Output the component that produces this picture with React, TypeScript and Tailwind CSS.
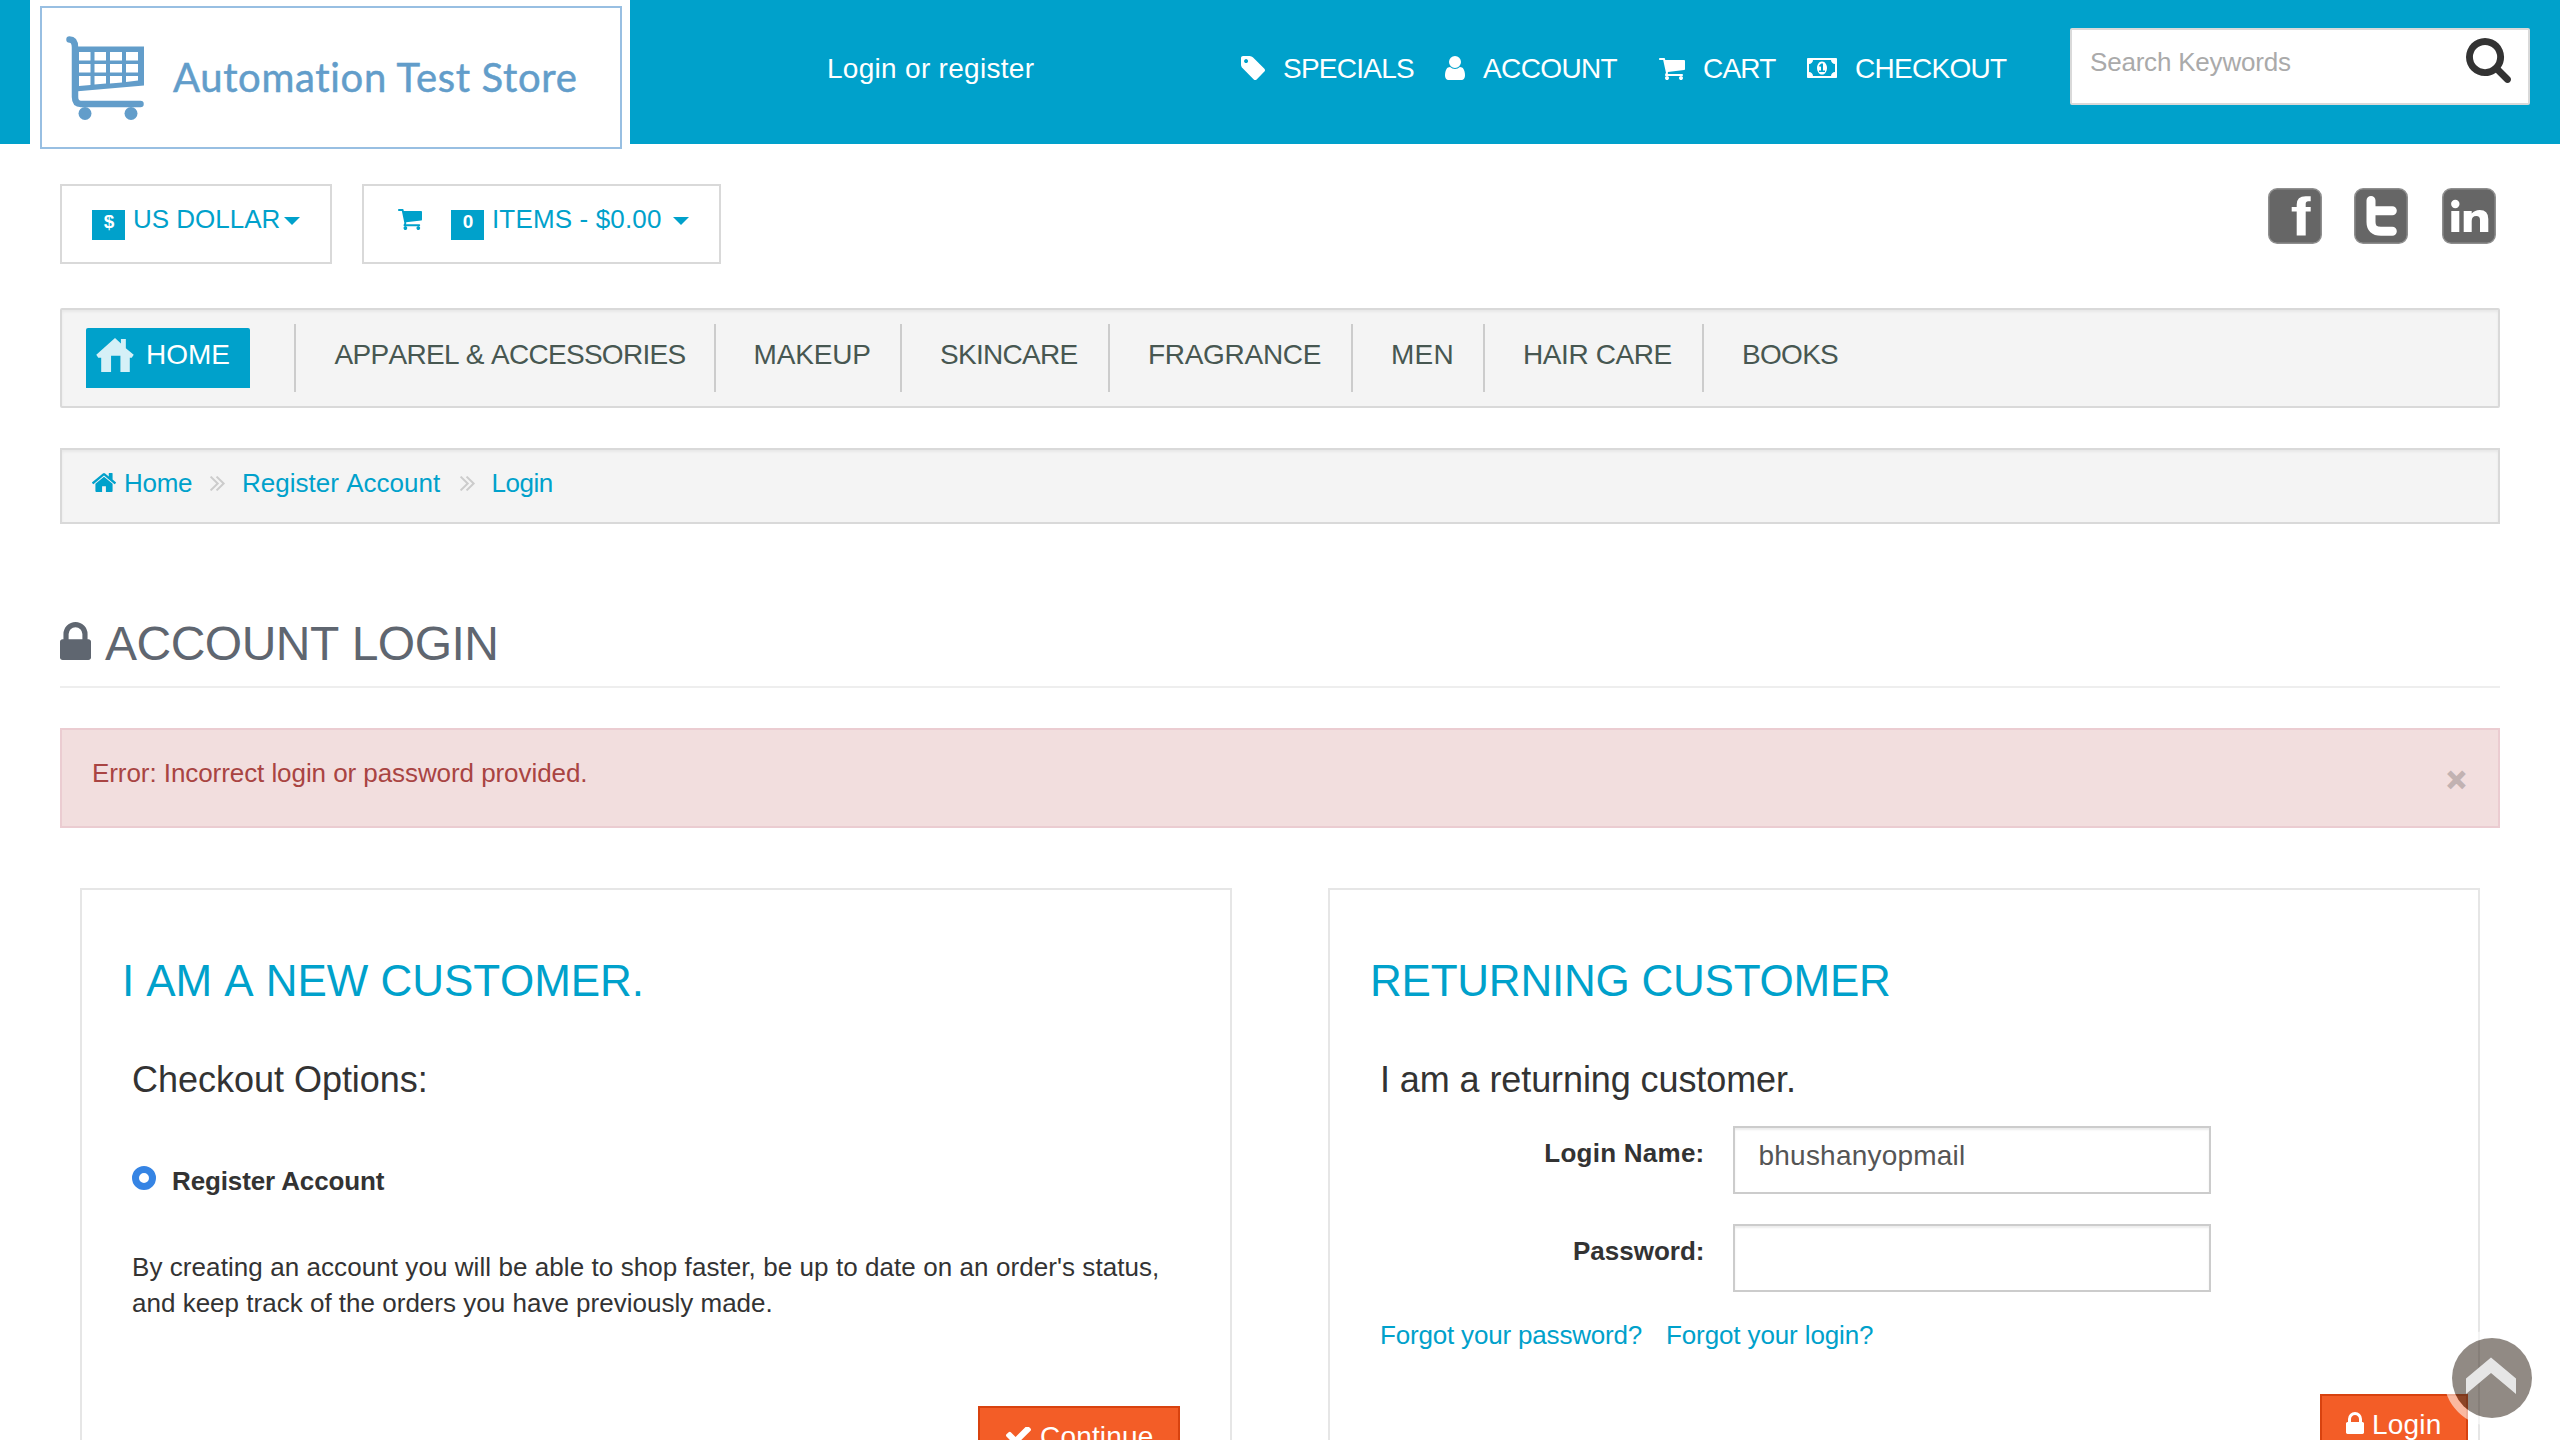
import React from 'react';

type IconProps = { box: string; d: string; className: string };

function Icon({ box, d, className }: IconProps) {
  return (
    <svg viewBox={box} preserveAspectRatio="none" fill="currentColor" className={`block flex-none ${className}`}>
      <path d={d} />
    </svg>
  );
}

const CART = {
  box: '64 256 1664 1408',
  d: 'M704 1536q0 52-38 90t-90 38-90-38-38-90 38-90 90-38 90 38 38 90zm896 0q0 52-38 90t-90 38-90-38-38-90 38-90 90-38 90 38 38 90zm128-1088v512q0 24-16.5 42.5t-40.5 21.5l-1044 122q13 60 13 70 0 16-24 64h920q26 0 45 19t19 45-19 45-45 19h-1024q-26 0-45-19t-19-45q0-11 8-31.5t16-36 21.5-40 15.5-29.5l-177-823h-204q-26 0-45-19t-19-45 19-45 45-19h256q16 0 28.5 6.5t19.5 15.5 13 24.5 8 26 5.5 29.5 4.5 26h1201q26 0 45 19t19 45z',
};
const LOCK = {
  box: '320 128 1152 1408',
  d: 'M640 768h512v-192q0-106-75-181t-181-75-181 75-75 181v192zm832 96v576q0 40-28 68t-68 28h-960q-40 0-68-28t-28-68v-576q0-40 28-68t68-28h32v-192q0-184 132-316t316-132 316 132 132 316v192h32q40 0 68 28t28 68z',
};
const TAG = {
  box: '128 128 1515 1515',
  d: 'M576 448q0-53-37.5-90.5t-90.5-37.5-90.5 37.5-37.5 90.5 37.5 90.5 90.5 37.5 90.5-37.5 37.5-90.5zm1067 576q0 53-37 90l-491 492q-39 37-91 37-53 0-90-37l-715-716q-38-37-64.5-101t-26.5-117v-416q0-52 38-90t90-38h416q53 0 117 26.5t102 64.5l715 714q37 39 37 91z',
};
const USER = {
  box: '256 128 1280 1536',
  d: 'M1536 1399q0 109-62.5 187t-150.5 78h-854q-88 0-150.5-78t-62.5-187q0-85 8.5-160.5t31.5-152 58.5-131 94-89 134.5-34.5q131 128 313 128t313-128q76 0 134.5 34.5t94 89 58.5 131 31.5 152 8.5 160.5zm-256-887q0 159-112.5 271.5t-271.5 112.5-271.5-112.5-112.5-271.5 112.5-271.5 271.5-112.5 271.5 112.5 112.5 271.5z',
};
const SEARCH = {
  box: '64 128 1664 1664',
  d: 'M1216 832q0-185-131.5-316.5t-316.5-131.5-316.5 131.5-131.5 316.5 131.5 316.5 316.5 131.5 316.5-131.5 131.5-316.5zm512 832q0 52-38 90t-90 38q-54 0-90-38l-343-342q-179 124-399 124-143 0-273.5-55.5t-225-150-150-225-55.5-273.5 55.5-273.5 150-225 225-150 273.5-55.5 273.5 55.5 225 150 150 225 55.5 273.5q0 220-124 399l343 343q37 37 37 90z',
};
const HOME = {
  box: '90 253 1612 1283',
  d: 'M1472 992v480q0 26-19 45t-45 19h-384v-384h-256v384h-384q-26 0-45-19t-19-45v-480q0-1 .5-3t.5-3l575-474 575 474q1 2 1 6zm223-69l-62 74q-8 9-21 11h-3q-13 0-21-7l-692-577-692 577q-12 8-24 7-13-2-21-11l-62-74q-8-10-7-23.5t11-21.5l719-599q32-26 76-26t76 26l244 204v-195q0-14 9-23t23-9h192q14 0 23 9t9 23v408l219 182q10 8 11 21.5t-7 23.5z',
};
const CHECK = {
  box: '121 402 1550 1120',
  d: 'M1671 566q0 40-28 68l-724 724-136 136q-28 28-68 28t-68-28l-136-136-362-362q-28-28-28-68t28-68l136-136q28-28 68-28t68 28l294 295 656-657q28-28 68-28t68 28l136 136q28 28 28 68z',
};
const ANGLES = {
  box: '429 461 966 998',
  d: 'M1011 960q0 13-10 23l-466 466q-10 10-23 10t-23-10l-50-50q-10-10-10-23t10-23l393-393-393-393q-10-10-10-23t10-23l50-50q10-10 23-10t23 10l466 466q10 10 10 23zm384 0q0 13-10 23l-466 466q-10 10-23 10t-23-10l-50-50q-10-10-10-23t10-23l393-393-393-393q-10-10-10-23t10-23l50-50q10-10 23-10t23 10l466 466q10 10 10 23z',
};
const MONEY = {
  box: '0 256 1920 1280',
  d: 'M768 1152h384v-96h-128v-448h-114l-148 137 77 80q42-37 55-57h2v288h-128v96zm512-256q0 70-21 142t-59.5 134-101.5 101-138 39-138-39-101.5-101-59.5-134-21-142 21-142 59.5-134 101.5-101 138-39 138 39 101.5 101 59.5 134 21 142zm512 256v-512q-106 0-181-75t-75-181h-1152q0 106-75 181t-181 75v512q106 0 181 75t75 181h1152q0-106 75-181t181-75zm128-832v1152q0 26-19 45t-45 19h-1792q-26 0-45-19t-19-45v-1152q0-26 19-45t45-19h1792q26 0 45 19t19 45z',
};

function Caret({ className }: { className: string }) {
  return (
    <svg viewBox="0 0 16 8" fill="currentColor" className={`block h-2 w-4 flex-none ${className}`}>
      <path d="M0 0h16l-8 8z" />
    </svg>
  );
}

function Logo() {
  return (
    <div className="ml-[30px] h-[144px] w-[600px] flex-none bg-white pl-[10px] pt-[6px]">
      <div className="flex h-[143px] w-[582px] border-2 border-[#98bfe2] bg-white text-[#629dca]">
        <svg viewBox="66 36 78 84" className="ml-[24px] mt-[28px] block h-[84px] w-[78px] flex-none">
          <path
            d="M69.5 39.5q5.500 0 5.500 8V97q0 7 6 7h59.500"
            fill="none"
            stroke="currentColor"
            strokeWidth="6.500"
            strokeLinecap="round"
          />
          <path
            fill="currentColor"
            fillRule="evenodd"
            d="M75 46.500h69V85.500L75 91.500zM79 52v8.500h11.500V52zM94.500 52v8.500h11.500V52zM110 52v8.500h12V52zM126 52v8.500h12V52zM79 64v8.500h11.500V64zM94.500 64v8.500h11.500V64zM110 64v8.500h12V64zM126 64v8.500h12V64zM79 76v10l11.500-1V76zM94.500 76v8.500l11.500-1V76zM110 76v7.500l12-1V76zM126 76v6l12-1.500V76z"
          />
          <ellipse cx="85" cy="113.500" rx="6.500" ry="6.500" fill="currentColor" />
          <ellipse cx="131" cy="113.500" rx="6.500" ry="6.500" fill="currentColor" />
        </svg>
        <span className="ml-[29px] mt-[45px] whitespace-nowrap font-[Lato] text-[40px] leading-[48px] tracking-[0.66px] [-webkit-text-stroke:0.5px_#629dca]">
          Automation Test Store
        </span>
      </div>
    </div>
  );
}

function Header() {
  return (
    <header className="flex h-[144px] items-start bg-[#00a1cb] text-[28px] leading-[31px] text-white">
      <Logo />
      <a className="ml-[197px] mt-[53px] w-[414px] flex-none tracking-[0.29px]">Login or register</a>
      <nav className="flex flex-none items-start pt-[53px]">
        <Icon {...TAG} className="mt-[3px] h-6 w-6" />
        <a className="ml-[18px] w-[162px] tracking-[-0.75px]">SPECIALS</a>
        <Icon {...USER} className="mt-[3px] h-6 w-5" />
        <a className="ml-[18px] w-[176px] tracking-[-0.63px]">ACCOUNT</a>
        <Icon {...CART} className="mt-[5px] h-[22px] w-[26px]" />
        <a className="ml-[18px] w-[104px] tracking-[-0.77px]">CART</a>
        <Icon {...MONEY} className="mt-[5px] h-5 w-[30px]" />
        <a className="ml-[18px] w-[215px] tracking-[-0.72px]">CHECKOUT</a>
      </nav>
      <div className="mt-[28px] flex h-[77px] w-[460px] flex-none items-start rounded-[2px] border-2 border-[#d9d9d9] bg-white">
        <input
          placeholder="Search Keywords"
          className="w-[394px] pb-[26px] pl-[18px] pt-[17px] text-[26px] leading-[30px] tracking-[-0.2px] text-[#555] outline-none placeholder:text-[#aaa]"
        />
        <Icon {...SEARCH} className="mt-[8px] h-[45px] w-[45px] text-[#333]" />
      </div>
    </header>
  );
}

function Badge({ children }: { children: React.ReactNode }) {
  return (
    <span className="mt-[24px] block h-[30px] w-[33px] flex-none bg-[#00a1cb] pl-px pt-px text-center text-[19px] font-bold leading-[21px] text-white">
      {children}
    </span>
  );
}

function SocialTile({ children, className }: { children: React.ReactNode; className: string }) {
  return (
    <svg viewBox="0 0 54 56" className={`block h-[56px] w-[54px] flex-none ${className}`}>
      <rect x="0.750" y="0.750" width="52.500" height="54.500" rx="8.500" fill="#666" stroke="#8f8f8f" strokeWidth="1.500" />
      {children}
    </svg>
  );
}

function Toolbar() {
  return (
    <div className="mt-[40px] flex h-[80px] items-start pl-[60px] text-[26px] leading-[30px] text-[#00a1cb]">
      <div className="flex h-[80px] w-[272px] flex-none items-start border-2 border-[#d9d9d9] pl-[30px]">
        <Badge>$</Badge>
        <span className="ml-[8px] mt-[18px] w-[151px] flex-none whitespace-nowrap">US DOLLAR</span>
        <Caret className="mt-[31px]" />
      </div>
      <div className="ml-[30px] flex h-[80px] w-[359px] flex-none items-start border-2 border-[#d9d9d9] pl-[34px]">
        <Icon {...CART} className="mt-[23px] h-[21px] w-[24px]" />
        <div className="ml-[29px] flex items-start">
          <Badge>0</Badge>
          <span className="ml-[8px] mt-[18px] w-[181px] flex-none whitespace-nowrap tracking-[0.15px]">ITEMS - $0.00</span>
          <Caret className="mt-[31px]" />
        </div>
      </div>
      <div className="ml-auto mr-[64px] mt-[4px] flex">
        <SocialTile className="">
          <path d="M28.700 47.500V23.500h-5V19h5v-2.500q0-8.300 9-8.300h5v5h-2.500q-2.500 0-2.500 2.500V19h5v4.500h-5v24z" fill="#fff" />
        </SocialTile>
        <SocialTile className="ml-[32px]">
          <path
            d="M17 12.500V34q0 9.300 10 9.300h11.300M17 22.700h21.300"
            fill="none"
            stroke="#fff"
            strokeWidth="9"
            strokeLinecap="round"
          />
        </SocialTile>
        <SocialTile className="ml-[34px]">
          <circle cx="13.300" cy="16" r="4.200" fill="#fff" />
          <path
            d="M9.300 23h8v21h-8zM21.700 23h8v2.500q3-3.500 8-3.500 8.600 0 8.600 9v13h-8.300V32q0-4-3.600-4-4.700 0-4.700 5v11h-8z"
            fill="#fff"
          />
        </SocialTile>
      </div>
    </div>
  );
}

const CATEGORIES = [
  { label: 'APPAREL & ACCESSORIES', cls: 'w-[420px] pl-[38.500px] tracking-[-0.7px] [font-kerning:none] border-r-2' },
  { label: 'MAKEUP', cls: 'w-[186px] pl-[37.500px] tracking-[-0.15px] border-r-2' },
  { label: 'SKINCARE', cls: 'w-[208px] pl-[38px] tracking-[-0.71px] border-r-2' },
  { label: 'FRAGRANCE', cls: 'w-[243px] pl-[38px] tracking-[-0.3px] border-r-2' },
  { label: 'MEN', cls: 'w-[132px] pl-[38px] tracking-[0.3px] border-r-2' },
  { label: 'HAIR CARE', cls: 'w-[219px] pl-[38px] tracking-[-0.4px] border-r-2' },
  { label: 'BOOKS', cls: 'w-[160px] pl-[38px] tracking-[-0.7px]' },
];

function CategoryNav() {
  return (
    <nav className="mx-[60px] mt-[44px] flex h-[100px] items-start rounded-[2px] border-2 border-[#d9d9d9] bg-[#f4f4f4] text-[28px] leading-[31px] shadow-[inset_0_2px_3px_rgba(0,0,0,0.05)]">
      <a className="ml-[24px] mt-[18px] flex h-[60px] w-[164px] flex-none items-start rounded-t-[2px] bg-[#00a1cb] pl-[10px] pt-[10px] text-white">
        <svg viewBox="0 0 38 34.5" className="block h-[34px] w-[38px] flex-none">
          <path d="M19 0l6 5.500V1h5v9.500l8 6.500-2 3h-2v14.500H24.500V18h-9.500v16.500H5V20H2L0 17z" fill="#d5f0f7" />
        </svg>
        <span className="ml-[12px] mt-px">HOME</span>
      </a>
      <div className="mt-[14px] flex h-[68px] text-[#475751]">
        <div className="w-[46px] flex-none border-r-2 border-[#ccc]" />
        {CATEGORIES.map((c) => (
          <a key={c.label} className={`block flex-none whitespace-nowrap border-[#ccc] pt-[15px] ${c.cls}`}>
            {c.label}
          </a>
        ))}
      </div>
    </nav>
  );
}

function Breadcrumb() {
  return (
    <div className="mx-[60px] mt-[40px] flex h-[76px] items-start border-2 border-[#d9d9d9] bg-[#f4f4f4] pl-[30px] pt-[18px] text-[26px] leading-[30px] text-[#00a1cb] shadow-[inset_0_2px_3px_rgba(0,0,0,0.05)]">
      <Icon {...HOME} className="mt-[5px] h-[19px] w-[24px]" />
      <a className="ml-[8px] w-[86px] flex-none tracking-[-0.3px]">Home</a>
      <Icon {...ANGLES} className="mt-[8px] h-[15px] w-[15px] text-[#ccc]" />
      <a className="ml-[17px] w-[217.500px] flex-none tracking-[0.01px] [font-kerning:none]">Register Account</a>
      <Icon {...ANGLES} className="mt-[8px] h-[15px] w-[15px] text-[#ccc]" />
      <a className="ml-[17px] flex-none tracking-[-0.45px]">Login</a>
    </div>
  );
}

const INPUT =
  'block h-[68px] w-[478px] flex-none border-2 border-[#ccc] bg-white pb-[21px] pl-[23.500px] pt-[12px] text-[28px] leading-[31px] tracking-[0.22px] text-[#555] shadow-[inset_0_2px_2px_rgba(0,0,0,0.075)] outline-none';

function NewCustomer() {
  return (
    <section className="flex h-[620px] w-[1152px] flex-none flex-col border-2 border-[#e6e6e6] bg-white pt-[66px]">
      <h2 className="ml-[40px] text-[44px] leading-[49px] tracking-[-0.06px] text-[#00a1cb] [font-kerning:none]">
        I AM A NEW CUSTOMER.
      </h2>
      <h4 className="ml-[50px] mt-[54px] text-[36px] leading-[41px] tracking-[-0.02px]">Checkout Options:</h4>
      <label className="ml-[50px] mt-[66px] flex items-start font-bold">
        <span className="block h-6 w-6 flex-none rounded-full border-[7px] border-[#3584e4] bg-white" />
        <span className="ml-[16px] tracking-[-0.12px]">Register Account</span>
      </label>
      <p className="ml-[50px] mt-[53px] whitespace-nowrap leading-[36px] tracking-[0.07px]">
        By creating an account you will be able to shop faster, be up to date on an order's status,
        <br />
        <span className="tracking-[0.01px]">and keep track of the orders you have previously made.</span>
      </p>
      <button className="mr-[50px] mt-[85px] flex h-[68px] w-[202px] flex-none items-start self-end border-2 border-[#d8420f] bg-[#f35d27] pl-[26px] pt-[13px] text-[28px] leading-[31px] text-white">
        <Icon {...CHECK} className="mt-[6px] h-[18px] w-[25px]" />
        <span className="ml-[9px] tracking-[0.17px]">Continue</span>
      </button>
    </section>
  );
}

function ReturningCustomer() {
  return (
    <section className="flex h-[620px] w-[1152px] flex-none flex-col border-2 border-[#e6e6e6] bg-white pt-[66px]">
      <h2 className="ml-[40px] text-[44px] leading-[49px] tracking-[-0.23px] text-[#00a1cb]">RETURNING CUSTOMER</h2>
      <h4 className="ml-[50px] mt-[54px] text-[36px] leading-[41px] tracking-[-0.09px]">I am a returning customer.</h4>
      <div className="ml-[50px] mt-[26px] flex flex-col gap-[30px]">
        <div className="flex items-start">
          <label className="mr-[28.500px] w-[324.500px] flex-none pt-[12px] text-right font-bold tracking-[0.25px]">Login Name:</label>
          <input defaultValue="bhushanyopmail" className={INPUT} />
        </div>
        <div className="flex items-start">
          <label className="mr-[28.500px] w-[324.500px] flex-none pt-[12px] text-right font-bold">Password:</label>
          <input type="password" className={INPUT} />
        </div>
      </div>
      <div className="ml-[50px] mt-[28px] flex text-[#00a1cb]">
        <a className="w-[286px] flex-none tracking-[-0.18px]">Forgot your password?</a>
        <a className="tracking-[-0.12px]">Forgot your login?</a>
      </div>
      <button className="mr-[10px] mt-[44px] flex h-[68px] w-[148px] flex-none items-start self-end border-2 border-[#d8420f] bg-[#f35d27] pl-[24px] pt-[13px] text-[28px] leading-[31px] text-white">
        <Icon {...LOCK} className="mt-[3px] h-[22px] w-[18px]" />
        <span className="ml-[8px] tracking-[0.2px]">Login</span>
      </button>
    </section>
  );
}

export default function App() {
  return (
    <div className="relative h-[1440px] w-[2560px] overflow-hidden bg-white font-['Liberation_Sans',Arial,sans-serif] text-[26px] leading-[30px] text-[#333]">
      <Header />
      <Toolbar />
      <CategoryNav />
      <Breadcrumb />
      <h1 className="mx-[60px] mt-[93px] flex h-[71px] items-start border-b-2 border-[#eee] text-[48px] leading-[53px] tracking-[-0.5px] text-[#5f6670] [font-kerning:none]">
        <Icon {...LOCK} className="mt-[5px] h-[38px] w-[31px]" />
        <span className="ml-[14px]">ACCOUNT LOGIN</span>
      </h1>
      <div className="mx-[60px] mt-[40px] flex h-[100px] items-start border-2 border-[#ebccd1] bg-[#f2dede] text-[#a94442]">
        <span className="ml-[30px] mt-[28px] tracking-[-0.07px]">Error: Incorrect login or password provided.</span>
        <button className="ml-auto mr-[32px] mt-[31px] text-[33px] font-bold leading-[37px] text-[#c2b2b2] [-webkit-text-stroke:1.5px_#c2b2b2]">×</button>
      </div>
      <main className="mt-[60px] flex gap-[96px] pl-[80px]">
        <NewCustomer />
        <ReturningCustomer />
      </main>
      <svg viewBox="0 0 96 96" className="absolute left-[2444px] top-[1330px] block h-[96px] w-[96px]">
        <circle cx="48" cy="48" r="44" fill="none" stroke="#fff" strokeOpacity="0.57" strokeWidth="8" />
        <circle cx="48" cy="48" r="40" fill="#3d3127" fillOpacity="0.57" />
        <path d="M47 27.500L72 48.500V64L47 43L22 64V48.500z" fill="#e6e6e6" />
      </svg>
    </div>
  );
}
